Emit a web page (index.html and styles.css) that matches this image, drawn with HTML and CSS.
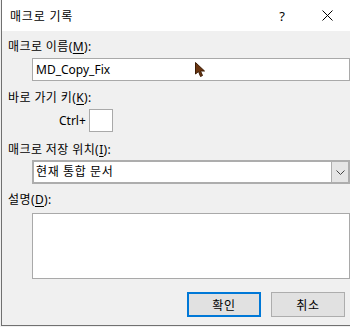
FILE: index.html
```html
<!DOCTYPE html>
<html lang="ko">
<head>
<meta charset="utf-8">
<link rel="stylesheet" href="styles.css">
</head>
<body>
<div class="dialog">
  <div class="titlebar">
    <span class="title">매크로 기록</span>
    <span class="help">?</span>
    <svg class="close" width="11" height="11" viewBox="0 0 11 11"><path d="M0.5 0.5 L10.5 10.5 M10.5 0.5 L0.5 10.5" stroke="#000" stroke-width="1" fill="none"/></svg>
  </div>
  <div class="content">
    <div class="label l1">매크로 이름(<u>M</u>):</div>
    <div class="field input">MD_Copy_Fix</div>
    <div class="label l2">바로 가기 키(<u>K</u>):</div>
    <div class="ctrl-row"><span class="ctrl">Ctrl+</span><span class="keybox"></span></div>
    <div class="label l3">매크로 저장 위치(<u>I</u>):</div>
    <div class="select">
      <span class="sel-text">현재 통합 문서</span>
      <span class="sel-btn"><svg width="9" height="5" viewBox="0 0 9 5"><path d="M0.5 0.5 L4.5 4.5 L8.5 0.5" stroke="#444" stroke-width="1" fill="none"/></svg></span>
    </div>
    <div class="label l4">설명(<u>D</u>):</div>
    <div class="field textarea"></div>
    <div class="buttons">
      <span class="btn default">확인</span>
      <span class="btn">취소</span>
    </div>
  </div>
  <svg class="cursor" width="12" height="17" viewBox="0 0 12 17"><path d="M0.5 0.5 L0.5 12 L3.5 9.5 L5.5 14.5 L7.5 13.5 L5.5 9 L9.5 9 Z" fill="#6a3510" stroke="#3d1d06" stroke-width="1"/></svg>
</div>
</body>
</html>
```
FILE: styles.css
```css
html, body {
  margin: 0;
  padding: 0;
  background: #f0f0f0;
}
body {
  width: 350px;
  height: 327px;
  overflow: hidden;
  font-family: "Noto Sans", "Noto Sans CJK KR", sans-serif;
  font-size: 12px;
  color: #000;
}
.dialog {
  position: relative;
  margin-left: 1px;
  width: 349px;
  height: 326px;
  border-left: 1px solid #707070;
  border-bottom: 1px solid #707070;
  background: #f0f0f0;
  box-sizing: border-box;
}
.titlebar {
  height: 31px;
  background: #fff;
  display: flex;
  align-items: center;
  padding-left: 8px;
}
.title {
  font-size: 12px;
  letter-spacing: 0.8px;
  flex: 1;
}
.help {
  font-size: 13px;
  margin-right: 37px;
}
.close {
  margin-right: 17px;
}
.content {
  padding-left: 6px;
  display: flex;
  flex-direction: column;
}
.label {
  line-height: 16px;
  height: 16px;
  letter-spacing: 0.4px;
}
.label u {
  text-underline-offset: 2px;
}
.l1 { margin-top: 8px; }
.l2 { margin-top: 9px; }
.l3 { margin-top: 10px; }
.l4 { margin-top: 8px; }
.field {
  margin-left: 24px;
  width: 318px;
  box-sizing: border-box;
  background: #fff;
  border: 1px solid #a9a9a9;
}
.input {
  margin-top: 3px;
  height: 23px;
  line-height: 21px;
  padding-left: 3px;
  font-size: 12px;
}
.ctrl-row {
  margin-top: 3px;
  height: 23px;
  display: flex;
  align-items: center;
  margin-left: 51px;
}
.ctrl {
  font-size: 12px;
  margin-right: 3px;
}
.keybox {
  width: 24px;
  height: 23px;
  box-sizing: border-box;
  background: #fff;
  border: 1px solid #a9a9a9;
}
.select {
  margin-top: 2px;
  margin-left: 24px;
  width: 318px;
  height: 24px;
  box-sizing: border-box;
  border: 2px solid #adadad;
  background: #fff;
  display: flex;
}
.sel-text {
  flex: 1;
  line-height: 20px;
  padding-left: 2px;
  font-size: 12px;
  letter-spacing: 0.6px;
}
.sel-btn {
  width: 16px;
  background: #e5e5e5;
  border-left: 1px solid #adadad;
  display: flex;
  align-items: center;
  justify-content: center;
}
.textarea {
  margin-top: 5px;
  height: 66px;
}
.buttons {
  margin-top: 13px;
  display: flex;
  justify-content: flex-end;
  gap: 10px;
  padding-right: 5px;
}
.btn {
  width: 74px;
  height: 25px;
  box-sizing: border-box;
  background: #e1e1e1;
  border: 1px solid #adadad;
  display: flex;
  align-items: center;
  justify-content: center;
  font-size: 12px;
  letter-spacing: 0.8px;
}
.btn.default {
  border: 2px solid #0078d7;
}
.cursor {
  position: absolute;
  left: 193px;
  top: 62px;
}
```
